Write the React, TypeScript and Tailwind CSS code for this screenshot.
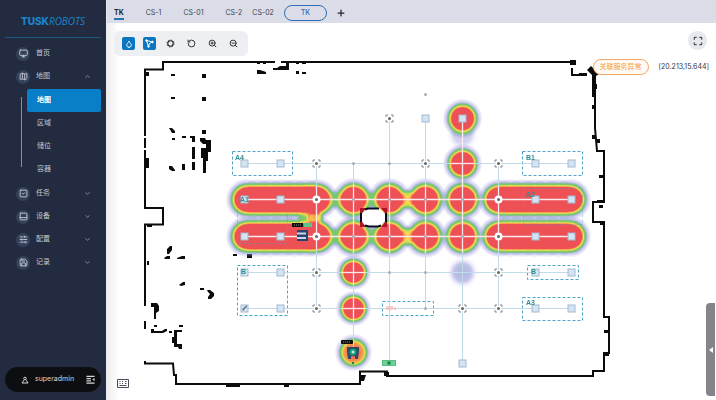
import {
  ChevronDown,
  ChevronUp,
  Droplet,
  Map as MapIcon,
  Maximize,
  Monitor,
  PanelBottom,
  Plus,
  RotateCcw,
  Save,
  SlidersHorizontal,
  SquareCheck,
  ZoomIn,
  ZoomOut,
  type LucideIcon,
} from 'lucide-react'

type NavItem = { label: string; icon: LucideIcon; open?: boolean; leaf?: boolean; children?: string[] }

const navItems: NavItem[] = [
  { label: '首页', icon: Monitor, leaf: true },
  { label: '地图', icon: MapIcon, open: true, children: ['地图', '区域', '储位', '容器'] },
  { label: '任务', icon: SquareCheck },
  { label: '设备', icon: PanelBottom },
  { label: '配置', icon: SlidersHorizontal },
  { label: '记录', icon: Save },
]

type Heat = { x: number; y: number; r?: number; w?: number }

const heatPoints: Heat[] = [
  ...[199, 236].flatMap((y) => [
    ...[353, 389, 425, 462].map((x) => ({ x, y })),
    // shelf rows are visited along their whole length
    ...[246, 258, 270, 282, 294, 306, 317, 498, 510, 522, 534, 546, 558, 570].map((x) => ({ x, y, r: 21 })),
    { x: 335, y, r: 12, w: 0.2 },
    { x: 371, y, r: 12, w: 0.15 },
    { x: 407, y, r: 12, w: 0.5 },
  ]),
  { x: 314, y: 217, r: 11, w: 0.6 },
  { x: 304, y: 217, r: 8, w: 0.3 },
  { x: 462, y: 118, r: 20 },
  { x: 462, y: 134, r: 16, w: 0.15 },
  { x: 462, y: 163, r: 20 },
  { x: 353, y: 272, r: 18 },
  { x: 353, y: 308, r: 18 },
  { x: 353, y: 352, r: 19, w: 0.85 },
  { x: 462, y: 272, r: 16, w: 0.22 },
]

// [x1, y1, x2, y2]
const routes = [
  [244, 163, 571, 163],
  [244, 199, 571, 199],
  [244, 236, 571, 236],
  [244, 272, 571, 272],
  [244, 308, 571, 308],
  [316, 163, 316, 308],
  [353, 163, 353, 352],
  [389, 118, 389, 362],
  [425, 118, 425, 308],
  [462, 118, 462, 362],
  [498, 163, 498, 308],
]

const hotRoutes = [
  [244, 199, 571, 199],
  [244, 236, 571, 236],
  [316, 186, 316, 249],
  [353, 184, 353, 252],
  [353, 260, 353, 284],
  [353, 296, 353, 320],
  [389, 184, 389, 252],
  [425, 184, 425, 252],
  [462, 120, 462, 252],
  [498, 186, 498, 249],
  [450, 163, 474, 163],
  [341, 272, 365, 272],
  [341, 308, 365, 308],
]

const shelves = [
  ...[163, 199, 236, 272, 308].flatMap((y) => [244, 280, 535, 571].map((x) => [x, y])),
  [425, 118],
  [462, 118],
  [462, 363],
]

const stations = [
  [316, 163], [316, 272], [316, 308], [389, 118], [425, 163],
  [498, 163], [498, 272], [498, 308], [462, 308],
]

const hotStations = [[316, 199], [316, 236], [498, 199], [498, 236]]

const dots = [
  [425, 94], [353, 163], [389, 163], [389, 272], [425, 272], [425, 308],
  [353, 199], [389, 199], [425, 199], [462, 199],
  [353, 236], [389, 236], [425, 236], [462, 236],
]

// [x, y, w, h, opacity]
const zones = [
  [232, 151, 60, 24, 1],
  [237, 199, 50, 44, 0.5],
  [237, 265, 50, 50, 1],
  [382, 301, 51, 14, 1],
  [522, 151, 60, 24, 1],
  [523, 188, 59, 36, 0.4],
  [527, 265, 51, 14, 1],
  [522, 297, 60, 23, 1],
]

const zoneLabels: [number, number, string][] = [
  [235, 160, 'A4'],
  [240, 202, 'A1'],
  [241, 274, 'B'],
  [526, 160, 'B1'],
  [526, 197, 'A2'],
  [531, 274, 'B'],
  [526, 305, 'A3'],
]

const walls = [
  'M145 136V69.500H163V62H275',
  'M281 62H575',
  'M145 138V148M145 150V208H163V224.500H145V306',
  'M145 321V329M145 361V363.500H173L174 375H176V384H360V371.500H387V376H593V371H604V353H609V317H604V222H593V202H604V151H597L595 128V78',
  'M572 68V75H584',
]

const specks =
  'M171 74h4v2h-4zM202 74h4v4h-4zM171 97h4v2h-4zM202 97h4v4h-4zM169 128h3l3 3v2h-3zM202 130h4v4h-4zM172 138h3v2h-3zM182 136h4v2h-4z' +
  'M190 136h5v6h-3v-4h-2zM192 147h3v12h-3zM192 162h3v8h-3zM182 164h3v6h-3zM169 166h3l3 4v1h-3l-3-2z' +
  'M200 138h5l1 2h5v12h-3v9h-2v12h-3v-15h-2v-10h5v-4h-3l-3-3z' +
  'M146 158h3v10h-3zM146 72h3v4h-3zM167 249l3-3h2v4l-3 4h-2zM164 258l3-2h3v3h-5zM177 258l5-2h3v3h-8zM147 261h2v4h-2zM147 225h5v2h-5z' +
  'M179 285l4-3h2v3l-4 1zM200 288h4v2h-4zM207 290h3l4 3v3l-3 3h-3v-2l2-3-2-2zM151 303h6l2 3v5l-3 2v6h-2v-12h-3zM154 325h3v2h-3zM151 329h3v2h8l3-2h2v2l-4 2h-12z' +
  'M169 331h3v2h-3zM179 325h4v2h-4zM174 330h8v2h-5v12h5v5h-3l-1-2h-4v-4h-2v-6h2z' +
  'M233 254h4v2h-4zM247 254h5v4h-5zM257 62h3v2h-3zM263 62h3v2h-3zM257 70h3l6 2v2h-9zM273 68h4l3-2h6v-4h3v8h-16zM296 62h3v2h-3zM302 62h4v2h-4zM296 71h3v3h-3zM302 72h4v2h-4z' +
  'M226 384h14v3h-14zM284 383h5v4h-5zM361 375h5l-2 6h-3zM570 60h6v5h-6zM579 73h8v3h-8zM587 70l4-4 8 8-3 2v8h1v5h-1v8h-4v-22z' +
  'M592 105h4v4h-4zM592 135h4v4h-4zM596 139h4v4h-4zM599 175h4v3h-4zM597 200h6v3h-6zM599 205h4v3h-4zM600 221h5v4h-5zM604 330h4v3h-4zM603 352h6v4h-6zM384 372h5v4h-5z'

function WarehouseMap() {
  return (
    <svg className="absolute inset-0 h-full w-full" viewBox="107 23 609 377" role="img" aria-label="地图">
      <defs>
        <radialGradient id="spot">
          <stop offset="0" stopColor="#000" stopOpacity="1" />
          <stop offset=".54" stopColor="#000" stopOpacity=".8" />
          <stop offset=".62" stopColor="#000" stopOpacity=".6" />
          <stop offset=".72" stopColor="#000" stopOpacity=".35" />
          <stop offset=".81" stopColor="#000" stopOpacity=".15" />
          <stop offset="1" stopColor="#000" stopOpacity="0" />
        </radialGradient>
        {/* turns accumulated alpha into the violet - green - yellow - red scale */}
        <filter id="heat" x="0" y="0" width="100%" height="100%" colorInterpolationFilters="sRGB">
          <feColorMatrix values="0 0 0 1 0  0 0 0 1 0  0 0 0 1 0  0 0 0 1 0" />
          <feComponentTransfer>
            <feFuncR type="table" tableValues=".6 .57 .52 .45 .46 .62 .98 .96 .93 .93 .93" />
            <feFuncG type="table" tableValues=".54 .55 .57 .74 .78 .82 .88 .62 .32 .32 .32" />
            <feFuncB type="table" tableValues=".86 .85 .82 .5 .42 .38 .3 .3 .34 .34 .34" />
            <feFuncA type="table" tableValues="0 .32 .62 .9 1 1 1 1 1 1 1" />
          </feComponentTransfer>
        </filter>
      </defs>

      <g fill="none" stroke="#0b0b0b" strokeWidth="2">
        {walls.map((d) => (
          <path key={d} d={d} />
        ))}
      </g>
      <path d={specks} fill="#0b0b0b" />

      <g filter="url(#heat)">
        {heatPoints.map((p, i) => (
          <circle key={i} cx={p.x + 0.5} cy={p.y + 0.5} r={p.r ?? 22} fill="url(#spot)" opacity={p.w ?? 1} />
        ))}
      </g>

      <path d="M360 208h6l-4 5v9l4 5h-6zM387 208h-6l4 5v9l-4 5h6z" fill="#b3122a" />
      <path d="M366 209h14l5 5v7l-5 6h-14l-4-6v-7z" fill="#fff" />
      <path d="M361 222v-9M365 209.500l3-1h11M386 213v9M365 225.500l4 1h9l3-1" fill="none" stroke="#0a0a24" strokeWidth="2" />

      <g fill="none" stroke="#4fa3c9" strokeDasharray="3 2">
        {zones.map(([x, y, w, h, opacity]) => (
          <rect key={`${x}-${y}`} x={x + 0.5} y={y + 0.5} width={w} height={h} opacity={opacity} />
        ))}
      </g>

      <g stroke="#c2dbea" strokeWidth="1">
        {routes.map(([x1, y1, x2, y2]) => (
          <line key={`${x1}-${y1}-${x2}`} x1={x1 + 0.5} y1={y1 + 0.5} x2={x2 + 0.5} y2={y2 + 0.5} />
        ))}
      </g>
      <g stroke="#fbe9ee" strokeWidth="1.300">
        {hotRoutes.map(([x1, y1, x2, y2]) => (
          <line key={`${x1}-${y1}-${x2}`} x1={x1 + 0.5} y1={y1 + 0.5} x2={x2 + 0.5} y2={y2 + 0.5} />
        ))}
      </g>

      <g fill="#d3e5f3" stroke="#a3b9cf">
        {shelves.map(([x, y]) => (
          <rect key={`${x}-${y}`} x={x - 3} y={y - 3} width="7" height="7" />
        ))}
      </g>
      {stations.map(([x, y]) => (
        <g key={`${x}-${y}`} transform={`translate(${x} ${y})`}>
          <rect x="-2" y="-2" width="5" height="5" fill="#fff" />
          <path d="M-3-1v-2h2M2-3h2v2M4 2v2h-2M-1 4h-2v-2" fill="none" stroke="#858585" />
          <circle cx=".5" cy=".5" r="1.500" fill="#666" />
        </g>
      ))}
      {hotStations.map(([x, y]) => (
        <g key={`${x}-${y}`}>
          <circle cx={x + 0.5} cy={y + 0.5} r="4" fill="#fff" />
          <circle cx={x + 0.5} cy={y + 0.5} r="1.500" fill="#666" />
        </g>
      ))}
      <g fill="#a9aeb8">
        {dots.map(([x, y]) => (
          <circle key={`${x}-${y}`} cx={x + 0.5} cy={y + 0.5} r="1.500" />
        ))}
      </g>

      <g className="font-['Liberation_Sans',sans-serif] text-[7px] font-bold" fill="#2f8f95">
        {zoneLabels.map(([x, y, label]) => (
          <text key={`${x}-${y}`} x={x} y={y}>
            {label}
          </text>
        ))}
      </g>
      <path d="M386 306h7v4h-7zM394 307h2v3h-2z" fill="#f6b9b4" opacity=".7" />
      <path d="M242 309l5-4v2l-4 4z" fill="#6b8199" />

      {/* forklift */}
      <g>
        <rect x="292" y="223" width="11" height="4" fill="#111" />
        <path d="M294 225h7" stroke="#8a8a8a" strokeDasharray="1 1" />
        <rect x="304" y="223" width="8" height="4" fill="#5fc48c" />
        <path d="M297 230h11v11h-11z" fill="#26456f" />
        <path d="M297 233.500h9M297 238h9" stroke="#c9d9ea" strokeWidth="2" />
      </g>

      {/* robot on its charging spot */}
      <g>
        <rect x="341" y="340" width="12" height="4" rx="1" fill="#111" />
        <path d="M343 342h7" stroke="#8a8a8a" strokeDasharray="1 1" />
        <path d="M347 347h12v3l-1 9h-3v-3h-4v3h-3l-1-9z" fill="#2c4a66" />
        <circle cx="353" cy="352" r="3.500" fill="#12a27b" />
        <path d="M353 350.500v3M351.500 352h3" stroke="#fff" />
        <path d="M352 362h2v2h-2z" fill="#1f7a4a" />
      </g>
      <rect x="382" y="360" width="14" height="6" fill="#55c083" />
      <path d="M384 361v4M386 361v4M392 361v4M394 361v4" stroke="#8bdcae" />
      <circle cx="389" cy="363" r="1.500" fill="#1f7a4a" />
    </svg>
  )
}

function Sidebar() {
  return (
    <aside className="flex w-[106px] shrink-0 flex-col bg-[#222b3f] px-[5px] pb-2 text-[7px] text-[#c3c8d3]">
      <div className="flex h-[38px] items-end justify-center border-b border-[#1f5680] pb-[10px] text-[10px] leading-3 text-[#1b84cb]">
        <span className="font-extrabold">TUSK</span>
        <span className="font-['Open_Sans',sans-serif] italic">ROBOTS</span>
      </div>

      <nav className="mt-1">
        {navItems.map((item) => {
          const Icon = item.icon
          return (
            <div key={item.label}>
              <a href="#" className="flex h-[23px] items-center pr-[10px] pl-[11px]">
                <span className="flex size-[14px] items-center justify-center rounded-full bg-[#33415a]">
                  <Icon className="size-[9px]" strokeWidth={2.5} />
                </span>
                <span className="ml-[6px] flex-1">{item.label}</span>
                {!item.leaf &&
                  (item.open ? <ChevronUp className="size-[7px]" /> : <ChevronDown className="size-[7px]" />)}
              </a>
              {item.children && (
                <div className="flex py-px">
                  <div className="mt-2 mb-[14px] ml-4 w-px bg-[#8790a1]" />
                  <div className="ml-[5px] flex-1">
                    {item.children.map((child, i) => (
                      <a
                        key={child}
                        href="#"
                        className={`flex h-[23px] items-center rounded-xs pl-[10px] ${
                          i === 0 ? 'bg-[#087fc8] font-bold text-white' : ''
                        }`}
                      >
                        {child}
                      </a>
                    ))}
                  </div>
                </div>
              )}
            </div>
          )
        })}
      </nav>

      <div className="mt-auto flex h-[25px] items-center rounded-full bg-[#0d0e11] pr-[6px] pl-4 text-[#d8d8d8]">
        <svg className="size-[8px]" viewBox="0 0 8 8" fill="none" stroke="currentColor">
          <circle cx="4" cy="2.500" r="1.300" />
          <path d="M2.800 4.200L1 7h6L5.200 4.200" />
        </svg>
        <span className="ml-[6px] flex-1">superadmin</span>
        <button type="button" aria-label="收起菜单">
          <svg className="size-[9px]" viewBox="0 0 10 10" fill="none" stroke="currentColor" strokeWidth="1.200">
            <path d="M.5 1.500h9M.5 4h5M.5 6.500h5M.5 9h9" />
            <path d="M9.500 3.300v3.400L7 5z" fill="currentColor" stroke="none" />
          </svg>
        </button>
      </div>
    </aside>
  )
}

function TabBar() {
  return (
    <header className="flex h-[23px] shrink-0 items-center bg-[#dadde7] pt-[2px] pl-[7px] text-[7px] leading-[10px] text-[#3d4452]">
      <button type="button" className="border-b-2 border-[#2a6fae] pt-[2px] font-bold text-[#22262e]">
        TK
      </button>
      <button type="button" className="ml-[22px]">CS-1</button>
      <button type="button" className="ml-[22px]">CS-01</button>
      <button type="button" className="ml-[22px]">CS-2</button>
      <button type="button" className="ml-[10px]">CS-02</button>
      <button
        type="button"
        className="ml-[10px] h-4 w-[43px] rounded-full border border-[#2f6db8] font-medium text-[#2f6db8]"
      >
        TK
      </button>
      <button type="button" aria-label="新增" className="ml-[9px] text-[#22262e]">
        <Plus className="size-[10px]" strokeWidth={3} />
      </button>
    </header>
  )
}

const toolButton = 'flex size-[13px] items-center justify-center rounded-xs'

function Toolbar() {
  return (
    <div className="flex gap-2 rounded-md bg-[#eeeff3] px-2 py-[6px] text-[#2b2b2b]">
      <button type="button" aria-label="热力图" className={`${toolButton} bg-[#0b76c0] text-white`}>
        <Droplet className="size-[8px]" strokeWidth={2.5} />
      </button>
      <button type="button" aria-label="路径" className={`${toolButton} bg-[#0b76c0] text-white`}>
        <svg className="size-[9px]" viewBox="0 0 9 9" fill="none" stroke="currentColor">
          <path d="M1.500 1.500L7.500 3L4.500 4.500L3.500 7.500z" />
          <circle cx="1.500" cy="1.500" r=".8" fill="currentColor" />
          <circle cx="7.500" cy="3" r=".8" fill="currentColor" />
          <circle cx="3.500" cy="7.500" r=".8" fill="currentColor" />
        </svg>
      </button>
      <button type="button" aria-label="设置" className={toolButton}>
        <svg className="size-[9px]" viewBox="0 0 9 9" fill="none" stroke="currentColor">
          <circle cx="4.500" cy="4.500" r="2.700" strokeWidth="1.100" />
          <circle cx="4.500" cy="4.500" r="3.500" strokeWidth=".9" strokeDasharray="1.375 1.375" />
        </svg>
      </button>
      <button type="button" aria-label="撤销" className={toolButton}>
        <RotateCcw className="size-[9px]" strokeWidth={2.5} />
      </button>
      <button type="button" aria-label="放大" className={toolButton}>
        <ZoomIn className="size-[9px]" strokeWidth={2.5} />
      </button>
      <button type="button" aria-label="缩小" className={toolButton}>
        <ZoomOut className="size-[9px]" strokeWidth={2.5} />
      </button>
    </div>
  )
}

export default function App() {
  return (
    <div className="flex min-h-screen bg-[#e9eaee] font-[Inter,'Noto_Sans_CJK_SC',sans-serif]">
      <Sidebar />
      <div className="ml-px flex min-w-0 flex-1 flex-col">
        <TabBar />
        <main className="relative flex flex-1 flex-col bg-white bg-linear-to-r from-[#eeeeef] to-white to-[12px]">
          <WarehouseMap />

          <div className="relative flex items-start justify-between pt-2 pr-[9px] pl-[7px]">
            <Toolbar />
            <button
              type="button"
              aria-label="全屏"
              className="flex size-[19px] items-center justify-center rounded-full bg-[#e6e8ee] text-[#2b2f38]"
            >
              <Maximize className="size-[10px]" strokeWidth={2.5} />
            </button>
          </div>

          <div className="relative mt-[3px] flex items-center justify-end gap-[10px] pr-[7px] text-[7px]">
            <span className="flex h-4 items-center rounded-full border border-[#f4a869] bg-[#fffaf3] px-[6px] text-[#f29a3f]">
              关联服务异常
            </span>
            <span className="text-[#33363d]">[20.213,15.644]</span>
          </div>

          <button
            type="button"
            aria-label="展开面板"
            className="absolute right-px bottom-1 flex h-[93px] w-[9px] items-center justify-center rounded-l bg-[#85848b]"
          >
            <svg className="size-[6px]" viewBox="0 0 6 6" fill="#fff">
              <path d="M5 0v6L1 3z" />
            </svg>
          </button>

          <button type="button" aria-label="键盘" className="absolute bottom-3 left-[10px] text-[#4a4d5c]">
            <svg className="h-[9px] w-3" viewBox="0 0 12 9" fill="none" stroke="currentColor">
              <path d="M.5.5h11v8H.5z" />
              <path d="M2.500 2.500h1M5 2.500h1M8 2.500h1.500M2.500 4.500h1M5 4.500h1M8 4.500h1.500M2.500 6.500h7" />
            </svg>
          </button>
        </main>
      </div>
    </div>
  )
}
